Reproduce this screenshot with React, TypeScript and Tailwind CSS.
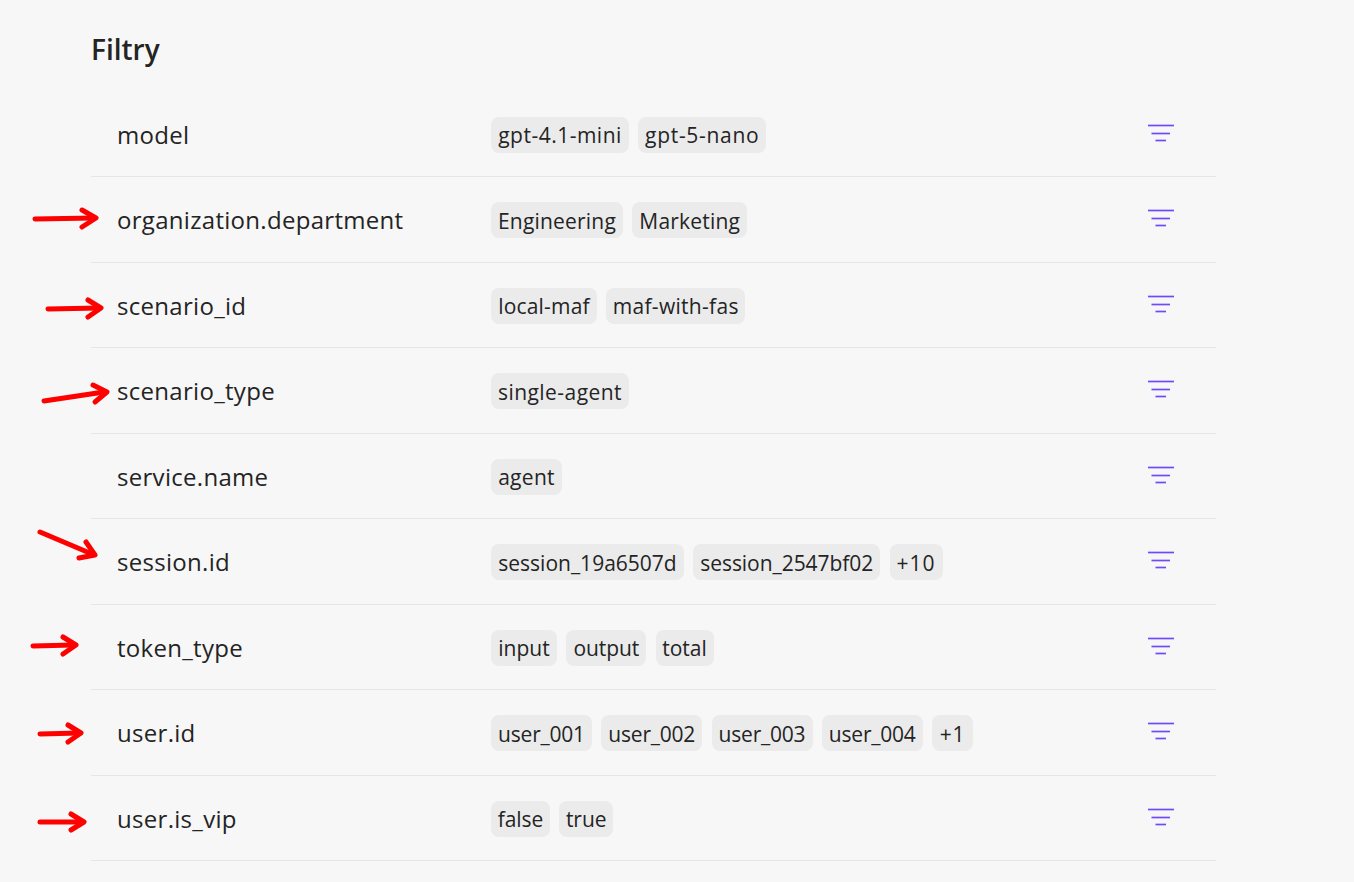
import React from 'react';

const rows = [
  {
    name: 'model',
    tags: [
      { label: 'gpt-4.1-mini', cls: 'w-[138px] tracking-[0.5px]' },
      { label: 'gpt-5-nano', cls: 'w-[128px] tracking-[0.7px]' },
    ],
  },
  {
    name: 'organization.department',
    tags: [
      { label: 'Engineering', cls: 'w-[132px] tracking-[0.2px]' },
      { label: 'Marketing', cls: 'w-[115px] tracking-[0.2px]' },
    ],
  },
  {
    name: 'scenario_id',
    tags: [
      { label: 'local-maf', cls: 'w-[106px] tracking-[0.2px]' },
      { label: 'maf-with-fas', cls: 'w-[139px] tracking-[0.3px]' },
    ],
  },
  { name: 'scenario_type', tags: [{ label: 'single-agent', cls: 'w-[138px] tracking-[0.45px]' }] },
  { name: 'service.name', tags: [{ label: 'agent', cls: 'w-[71px] tracking-[0.3px]' }] },
  {
    name: 'session.id',
    tags: [
      { label: 'session_19a6507d', cls: 'w-[193px] tracking-[0px]' },
      { label: 'session_2547bf02', cls: 'w-[187px] tracking-[-0.05px]' },
      { label: '+10', cls: 'w-[53px] tracking-[1px]' },
    ],
  },
  {
    name: 'token_type',
    tags: [
      { label: 'input', cls: 'w-[66px] tracking-[0px]' },
      { label: 'output', cls: 'w-[80px] tracking-[-0.1px]' },
      { label: 'total', cls: 'w-[58px] tracking-[0px]' },
    ],
  },
  {
    name: 'user.id',
    tags: [
      { label: 'user_001', cls: 'w-[101px] tracking-[-0.2px]' },
      { label: 'user_002', cls: 'w-[101px] tracking-[-0.2px]' },
      { label: 'user_003', cls: 'w-[101px] tracking-[-0.2px]' },
      { label: 'user_004', cls: 'w-[101px] tracking-[-0.2px]' },
      { label: '+1', cls: 'w-[41px] tracking-[0.8px]' },
    ],
  },
  {
    name: 'user.is_vip',
    tags: [
      { label: 'false', cls: 'w-[59px] tracking-[-0.1px]' },
      { label: 'true', cls: 'w-[54px] tracking-[0px]' },
    ],
  },
];

// hand-drawn annotation arrows: shaft, then head
const arrows = [
  { shaft: 'M35 219 L94 218', head: 'M82 210 L96 218 L82 227' },
  { shaft: 'M48 309 L99 308', head: 'M88 300 L101 308 L88 317' },
  { shaft: 'M44 401 L104 392', head: 'M93 385 L107 392 L95 402' },
  { shaft: 'M40 532 L92 554', head: 'M86 542 L95 555 L79 558' },
  { shaft: 'M33 646 L73 645', head: 'M63 637 L76 645 L63 654' },
  { shaft: 'M40 734 L79 733', head: 'M68 725 L81 733 L68 742' },
  { shaft: 'M40 822 L82 822', head: 'M71 814 L84 822 L71 830' },
];

const FilterIcon = () => (
  <svg width="28" height="20" viewBox="0 0 28 20" fill="none" stroke="#6d4aff" strokeWidth="1.7">
    <path d="M1 2.5H27" />
    <path d="M4.5 10.5H23" />
    <path d="M8.5 17.5H19" />
  </svg>
);

const App = () => {
  return (
    <div className="relative w-[1354px] h-[882px] overflow-hidden bg-[#f7f7f7] text-[#242424] font-['Open_Sans','Noto_Sans',sans-serif]">
      <div className="w-[1125px] ml-[91px] pt-[27px]">
        <h2 className="text-[28px] leading-[44px] font-semibold h-[64.5px]">Filtry</h2>

        {rows.map((row) => (
          <div key={row.name} className="flex items-center h-[85.5px] border-b border-[#e6e6e6] pl-[26px]">
            <div className="w-[374px] text-[24px] leading-[30px] tracking-[0.3px] pt-[2px]">{row.name}</div>
            <div className="flex-1 flex items-center gap-[9.25px] pt-[2px]">
              {row.tags.map((tag) => (
                <span key={tag.label} className={`h-[36px] pt-[2px] flex items-center justify-center whitespace-nowrap rounded-lg bg-[#ebebeb] text-[21px] ${tag.cls}`}>
                  {tag.label}
                </span>
              ))}
            </div>
            <div className="w-[69px] pb-[2px]">
              <FilterIcon />
            </div>
          </div>
        ))}
      </div>

      <svg className="absolute left-0 top-0 pointer-events-none" width="1354" height="882" fill="none" stroke="#ff0000" strokeWidth="5" strokeLinecap="round" strokeLinejoin="round">
        {arrows.map((a) => (
          <g key={a.shaft}>
            <path d={a.shaft} />
            <path d={a.head} />
          </g>
        ))}
      </svg>
    </div>
  );
};

export default App;
